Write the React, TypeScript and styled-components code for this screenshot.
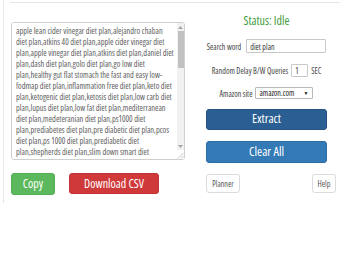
import React from "react";
import styled, { createGlobalStyle } from "styled-components";

const Global = createGlobalStyle`
  html, body { margin: 0; padding: 0; background: #fff; }
  body {
    font-family: "Open Sans", "Liberation Sans", Arial, sans-serif;
    font-stretch: 75%;
    color: #333;
  }
  * { box-sizing: border-box; }
`;

const Page = styled.div`
  margin-left: 3px;
  border-left: 1px solid #e6e6e6;
  width: 345px;
`;

const TopBar = styled.div`
  height: 3px;
  margin: 0 8px 0 6px;
  border-bottom: 1px solid #e6e6e6;
`;

const Row = styled.div`
  display: flex;
`;

const LeftCol = styled.div`
  flex: 0 0 185px;
  padding: 19px 0 8px 7px;
`;

const AreaBox = styled.div`
  display: flex;
  width: 174px;
  height: 138px;
  border: 1px solid #cfcfcf;
  border-radius: 3px;
  overflow: hidden;
  background: #fff;
`;

const KeywordArea = styled.textarea`
  flex: 1;
  min-width: 0;
  height: 100%;
  margin: 0;
  padding: 2px 3px 0 4px;
  border: none;
  font-family: inherit;
  font-stretch: 75%;
  font-size: 8.3px;
  line-height: 11px;
  color: #5e5e5e;
  resize: none;
  outline: none;
  overflow: hidden;
`;

const ScrollTrack = styled.div`
  flex: 0 0 7px;
  display: flex;
  flex-direction: column;
  background: #f1f1f1;
`;

const ArrowCell = styled.div`
  height: 8px;
  display: flex;
  align-items: center;
  justify-content: center;
`;

const Thumb = styled.div`
  height: 37px;
  margin: 0 0.5px;
  background: #c1c1c1;
`;

const TrackFill = styled.div`
  flex: 1;
`;

const Corner = styled.div`
  height: 9px;
  display: flex;
  align-items: flex-end;
  justify-content: flex-end;
  background: #fff;
`;

const ButtonRow = styled.div`
  display: flex;
  gap: 14px;
  margin-top: 13px;
`;

const SolidButton = styled.button<{ $bg: string; $border: string; $w: number; $h: number }>`
  width: ${(p) => p.$w}px;
  height: ${(p) => p.$h}px;
  padding: 0;
  background: ${(p) => p.$bg};
  border: 1px solid ${(p) => p.$border};
  border-radius: 3px;
  color: #fff;
  font-family: inherit;
  font-stretch: 75%;
  font-size: 12px;
  line-height: 1;
  cursor: pointer;
`;

const RightCol = styled.div`
  flex: 0 0 155px;
  display: flex;
  flex-direction: column;
  align-items: center;
  padding-top: 11px;
`;

const Status = styled.div`
  height: 14px;
  line-height: 14px;
  font-size: 12px;
  color: #3d9b3d;
`;

const FormRow = styled.div<{ $gap: number; $mt: number }>`
  display: flex;
  align-items: center;
  gap: ${(p) => p.$gap}px;
  margin-top: ${(p) => p.$mt}px;
  font-size: 8px;
  color: #444;
  white-space: nowrap;
`;

const TextInput = styled.input<{ $w: number; $h: number }>`
  width: ${(p) => p.$w}px;
  height: ${(p) => p.$h}px;
  margin: 0;
  padding: 0 0 0 3px;
  border: 1px solid #c8c8c8;
  border-radius: 1px;
  font-family: inherit;
  font-stretch: 75%;
  font-size: 8px;
  color: #333;
  outline: none;
`;

const SelectWrap = styled.div`
  position: relative;
  &::after {
    content: "▼";
    position: absolute;
    right: 5px;
    top: 3px;
    font-size: 5px;
    color: #111;
    pointer-events: none;
  }
`;

const SiteSelect = styled.select`
  appearance: none;
  width: 58px;
  height: 12px;
  margin: 0;
  padding: 0 0 0 3px;
  border: 1px solid #b9b9b9;
  border-radius: 1px;
  background: #fff;
  font-family: inherit;
  font-stretch: 75%;
  font-size: 8px;
  line-height: 10px;
  color: #222;
  outline: none;
`;

const WideButton = styled(SolidButton)`
  margin-top: ${(p) => (p.$h === 21 ? 10 : 11)}px;
  font-size: 12.5px;
`;

const SmallRow = styled.div`
  align-self: stretch;
  display: flex;
  justify-content: space-between;
  margin-top: 11px;
  padding: 0 8px 0 17px;
`;

const OutlineButton = styled.button<{ $w: number }>`
  width: ${(p) => p.$w}px;
  height: 19px;
  padding: 0;
  background: #fff;
  border: 1px solid #dcdcdc;
  border-radius: 3px;
  font-family: inherit;
  font-stretch: 75%;
  font-size: 8px;
  color: #555;
  cursor: pointer;
`;

const Arrow = ({ up }: { up: boolean }) => (
  <svg width="5" height="3" viewBox="0 0 5 3">
    <polygon points={up ? "2.5,0 5,3 0,3" : "0,0 5,0 2.5,3"} fill="#a3a3a3" />
  </svg>
);

const Grip = () => (
  <svg width="7" height="7" viewBox="0 0 7 7">
    <line x1="6.5" y1="1" x2="1" y2="6.5" stroke="#b5b5b5" strokeWidth="0.8" />
    <line x1="6.5" y1="4" x2="4" y2="6.5" stroke="#b5b5b5" strokeWidth="0.8" />
  </svg>
);

const keywords =
  "apple lean cider vinegar diet plan,alejandro chaban diet plan,atkins 40 diet plan,apple cider vinegar diet plan,apple vinegar diet plan,atkins diet plan,daniel diet plan,dash diet plan,golo diet plan,go low diet plan,healthy gut flat stomach the fast and easy low-fodmap diet plan,inflammation free diet plan,keto diet plan,ketogenic diet plan,ketosis diet plan,low carb diet plan,lupus diet plan,low fat diet plan,mediterranean diet plan,medeteranian diet plan,ps1000 diet plan,prediabetes diet plan,pre diabetic diet plan,pcos diet plan,ps 1000 diet plan,prediabetic diet plan,shepherds diet plan,slim down smart diet plan,south beach diet plan,sugar free diet plan,the 17 day diet plan,the daniel diet plan,the dash diet plan,the fast diet plan,the keto diet plan,ultimate diet plan,vegan diet plan,vegetarian diet plan,weight loss diet plan,whole30 diet plan,zone diet plan";

export default function App() {
  return (
    <>
      <Global />
      <Page>
        <TopBar />
        <Row>
          <LeftCol>
            <AreaBox>
              <KeywordArea defaultValue={keywords} spellCheck={false} />
              <ScrollTrack>
                <ArrowCell>
                  <Arrow up />
                </ArrowCell>
                <Thumb />
                <TrackFill />
                <ArrowCell>
                  <Arrow up={false} />
                </ArrowCell>
                <Corner>
                  <Grip />
                </Corner>
              </ScrollTrack>
            </AreaBox>
            <ButtonRow>
              <SolidButton $bg="#5cb85c" $border="#55ad55" $w={44} $h={22}>
                Copy
              </SolidButton>
              <SolidButton $bg="#d0393a" $border="#c33335" $w={90} $h={21}>
                Download CSV
              </SolidButton>
            </ButtonRow>
          </LeftCol>
          <RightCol>
            <Status>Status: Idle</Status>
            <FormRow $gap={5} $mt={11}>
              <span>Search word</span>
              <TextInput $w={80} $h={14} defaultValue="diet plan" />
            </FormRow>
            <FormRow $gap={3} $mt={11}>
              <span>Random Delay B/W Queries</span>
              <TextInput $w={17} $h={13} defaultValue="1" />
              <span>SEC</span>
            </FormRow>
            <FormRow $gap={3} $mt={10}>
              <span>Amazon site</span>
              <SelectWrap>
                <SiteSelect defaultValue="amazon.com">
                  <option>amazon.com</option>
                  <option>amazon.co.uk</option>
                  <option>amazon.de</option>
                </SiteSelect>
              </SelectWrap>
            </FormRow>
            <WideButton $bg="#2b5f93" $border="#245283" $w={121} $h={21}>
              Extract
            </WideButton>
            <WideButton $bg="#337ab7" $border="#2e6da4" $w={121} $h={22}>
              Clear All
            </WideButton>
            <SmallRow>
              <OutlineButton $w={34}>Planner</OutlineButton>
              <OutlineButton $w={24}>Help</OutlineButton>
            </SmallRow>
          </RightCol>
        </Row>
      </Page>
    </>
  );
}
